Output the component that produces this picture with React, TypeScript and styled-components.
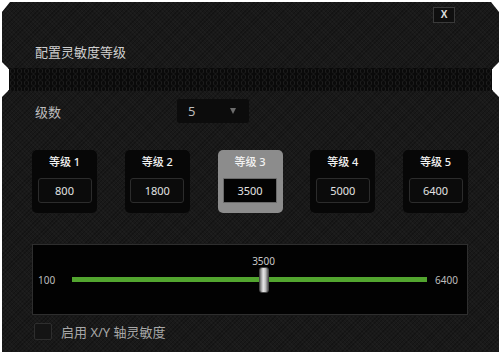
// Packages
import styled, { createGlobalStyle } from 'styled-components';
import { memo } from 'react';

const GlobalStyle = createGlobalStyle`
  html, body {
    margin: 0;
    padding: 0;
    background: #ffffff;
  }
  body {
    font-family: 'Noto Sans', 'Noto Sans CJK SC', sans-serif;
  }
`;

const LEVELS = [800, 1800, 3500, 5000, 6400];
const SELECTED = 2;
const MIN = 100;
const MAX = 6400;

// Main
function App() {
  const value = LEVELS[SELECTED];
  const ratio = (value - MIN) / (MAX - MIN);

  return (
    <>
      <GlobalStyle />
      <Window>
        <Header>
          <CloseRow>
            <CloseButton>X</CloseButton>
          </CloseRow>
          <Title>配置灵敏度等级</Title>
        </Header>

        <HexBand />

        <Body>
          <CountRow>
            <CountLabel>级数</CountLabel>
            <Dropdown>
              <span>5</span>
              <Arrow />
            </Dropdown>
          </CountRow>

          <CardRow>
            {LEVELS.map((level, i) => (
              <Card key={level} $selected={i === SELECTED}>
                <CardLabel>等级 {i + 1}</CardLabel>
                <CardInput $selected={i === SELECTED}>{level}</CardInput>
              </Card>
            ))}
          </CardRow>

          <SliderPanel>
            <MinLabel>{MIN}</MinLabel>
            <TrackArea>
              <Bar />
              <Thumb style={{ left: `${ratio * 100}%` }}>
                <ThumbValue>{value}</ThumbValue>
              </Thumb>
            </TrackArea>
            <MaxLabel>{MAX}</MaxLabel>
          </SliderPanel>

          <CheckRow>
            <Checkbox />
            <CheckText>启用 X/Y 轴灵敏度</CheckText>
          </CheckRow>
        </Body>
      </Window>
    </>
  );
}

const Window = styled.div`
  width: 497px;
  height: 350px;
  margin: 2px 0 0 2px;
  overflow: hidden;
  background-color: #191919;
  background-image: repeating-linear-gradient(
      45deg,
      rgba(255, 255, 255, 0.018) 0 1px,
      transparent 1px 3px
    ),
    repeating-linear-gradient(
      -45deg,
      rgba(0, 0, 0, 0.25) 0 1px,
      transparent 1px 3px
    );
  clip-path: polygon(
    0 10px,
    8px 0,
    489px 0,
    497px 10px,
    497px 60px,
    490px 67px,
    490px 88px,
    497px 95px,
    497px 350px,
    0 350px,
    0 95px,
    7px 88px,
    7px 67px,
    0 60px
  );
`;

const Header = styled.div`
  height: 66px;
  box-sizing: border-box;
  padding: 5px 44px 0 33px;
  display: flex;
  flex-direction: column;
`;

const CloseRow = styled.div`
  display: flex;
  justify-content: flex-end;
`;

const CloseButton = styled.div`
  width: 22px;
  height: 16px;
  box-sizing: border-box;
  border: 1px solid #3a3a3a;
  background: #0f0f0f;
  color: #e0e0e0;
  font-family: 'Liberation Sans', sans-serif;
  font-weight: bold;
  font-size: 10px;
  line-height: 14px;
  text-align: center;
`;

const Title = styled.div`
  margin-top: 21px;
  font-size: 13px;
  line-height: 17px;
  color: #cfcfcf;
`;

const HexBand = styled.div`
  height: 23px;
  background-color: #0a0a0a;
  background-image: radial-gradient(
    circle,
    transparent 1.6px,
    #222222 2.2px,
    transparent 2.9px
  );
  background-size: 7px 6px;
`;

const Body = styled.div`
  padding: 8px 31px 0 30px;
  display: flex;
  flex-direction: column;
`;

const CountRow = styled.div`
  display: flex;
  align-items: center;
  height: 24px;
`;

const CountLabel = styled.div`
  width: 142px;
  padding-left: 3px;
  font-size: 13px;
  color: #bdbdbd;
`;

const Dropdown = styled.div`
  width: 72px;
  height: 24px;
  box-sizing: border-box;
  padding: 0 13px 0 11px;
  display: flex;
  align-items: center;
  justify-content: space-between;
  background: #0c0c0c;
  border-radius: 3px;
  font-size: 13px;
  color: #bdbdbd;
`;

const Arrow = styled.span`
  width: 0;
  height: 0;
  border-left: 3.5px solid transparent;
  border-right: 3.5px solid transparent;
  border-top: 6px solid #6c6c6c;
`;

const CardRow = styled.div`
  margin-top: 27px;
  display: flex;
  justify-content: space-between;
`;

const Card = styled.div<{ $selected: boolean }>`
  width: 65px;
  height: 63px;
  box-sizing: border-box;
  padding-top: 5px;
  display: flex;
  flex-direction: column;
  align-items: center;
  border-radius: 5px;
  background: ${(p) => (p.$selected ? '#8c8c8c' : '#070707')};
`;

const CardLabel = styled.div`
  font-size: 11px;
  line-height: 14px;
  color: #f2f2f2;
  font-weight: 500;
`;

const CardInput = styled.div<{ $selected: boolean }>`
  margin-top: 9px;
  width: 54px;
  height: 25px;
  box-sizing: border-box;
  border: 1px solid ${(p) => (p.$selected ? '#6a6a6a' : '#2c2c2c')};
  border-radius: ${(p) => (p.$selected ? '1px' : '3px')};
  background: ${(p) => (p.$selected ? '#030303' : '#0b0b0b')};
  color: #e2e2e2;
  font-size: 11px;
  line-height: 23px;
  text-align: center;
`;

const SliderPanel = styled.div`
  margin-top: 31px;
  height: 71px;
  box-sizing: border-box;
  border: 1px solid #2e2e2e;
  background: #020202;
  display: flex;
  align-items: center;
`;

const MinLabel = styled.div`
  width: 39px;
  padding-left: 5px;
  box-sizing: border-box;
  font-size: 10px;
  color: #bdbdbd;
`;

const MaxLabel = styled.div`
  width: 40px;
  padding-left: 8px;
  box-sizing: border-box;
  font-size: 10px;
  color: #bdbdbd;
`;

const TrackArea = styled.div`
  flex: 1;
  height: 26px;
  position: relative;
  display: flex;
  align-items: center;
`;

const Bar = styled.div`
  width: 100%;
  height: 5px;
  background: #52a52f;
`;

const Thumb = styled.div`
  position: absolute;
  top: 0;
  width: 10px;
  height: 26px;
  margin-left: -5px;
  box-sizing: border-box;
  border-radius: 3px;
  border: 1px solid #4a4a4a;
  background: linear-gradient(90deg, #6f6f6f, #e6e6e6 40%, #c9c9c9 65%, #5c5c5c);
`;

const ThumbValue = styled.div`
  position: absolute;
  bottom: 100%;
  left: 50%;
  transform: translateX(-50%);
  font-size: 10px;
  line-height: 13px;
  color: #c8c8c8;
`;

const CheckRow = styled.div`
  margin-top: 7px;
  display: flex;
  align-items: center;
  gap: 9px;
  padding-left: 2px;
`;

const Checkbox = styled.div`
  width: 18px;
  height: 17px;
  box-sizing: border-box;
  border: 1px solid #2e2e2e;
  border-radius: 2px;
  background: #141414;
`;

const CheckText = styled.div`
  font-size: 13px;
  color: #a8a8a8;
`;

export default memo(App);
